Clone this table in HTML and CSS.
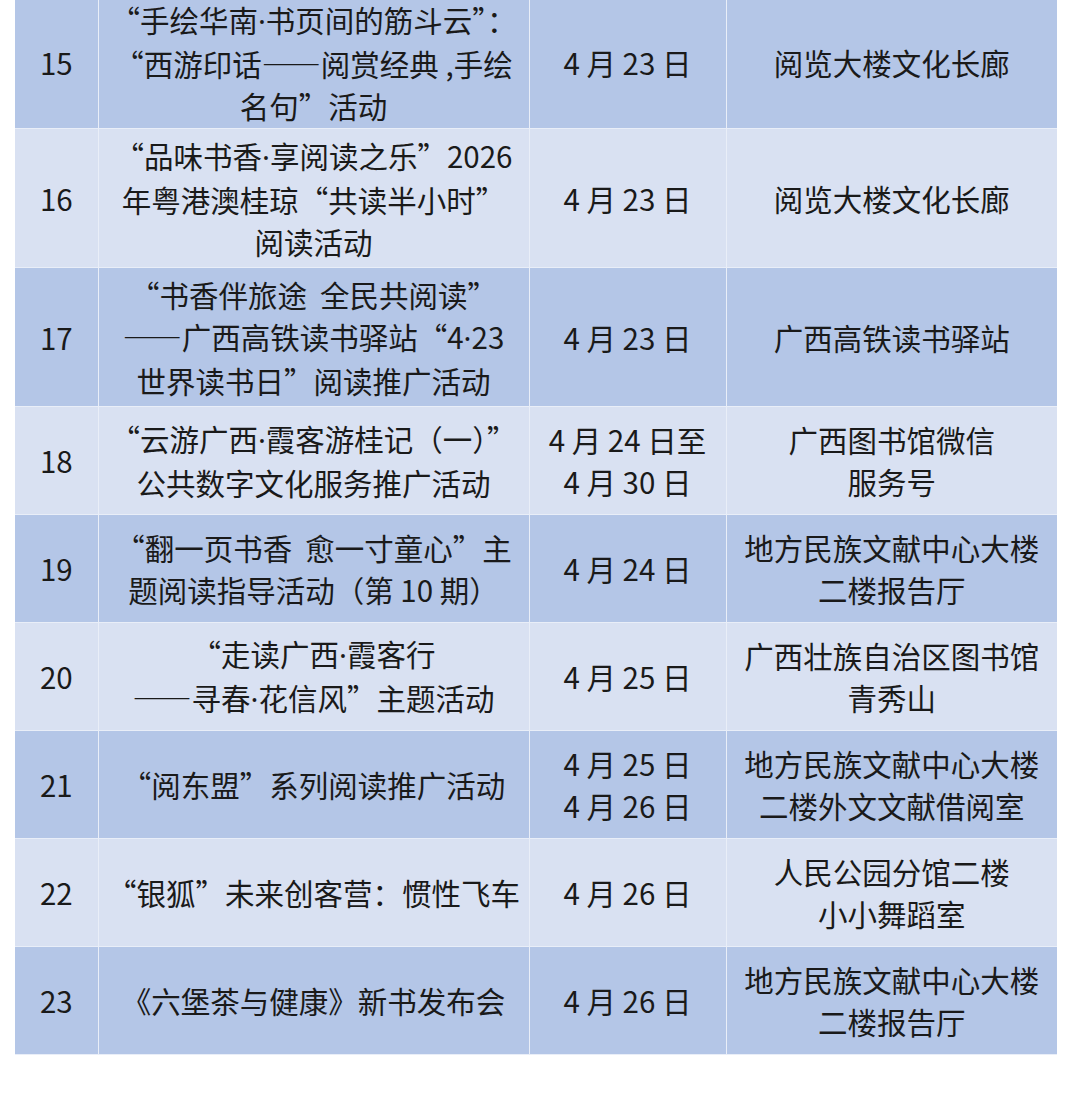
FILE: index.html
```html
<!DOCTYPE html>
<html lang="zh-CN">
<head>
<meta charset="utf-8">
<title>活动表</title>
<link rel="stylesheet" href="styles.css">
</head>
<body>
<div class="wrap">
<table class="sched">
<colgroup>
<col class="c-no"><col class="c-name"><col class="c-date"><col class="c-place">
</colgroup>
<tbody>
<tr class="dark first">
<td>15</td>
<td>“手绘华南<span class="dot">·</span>书页间的筋斗云”：<br>“西游印话——阅赏经典 ,手绘<br>名句”活动</td>
<td>4 月 23 日</td>
<td>阅览大楼文化长廊</td>
</tr>
<tr class="light tall3">
<td>16</td>
<td>“品味书香<span class="dot">·</span>享阅读之乐”2026<br>年粤港澳桂琼“共读半小时”<br>阅读活动</td>
<td>4 月 23 日</td>
<td>阅览大楼文化长廊</td>
</tr>
<tr class="dark tall3">
<td>17</td>
<td>“书香伴旅途&nbsp;&nbsp;全民共阅读”<br>——广西高铁读书驿站“4<span class="dot">·</span>23<br>世界读书日”阅读推广活动</td>
<td>4 月 23 日</td>
<td>广西高铁读书驿站</td>
</tr>
<tr class="light tall2">
<td>18</td>
<td>“云游广西<span class="dot">·</span>霞客游桂记（一）”<br>公共数字文化服务推广活动</td>
<td>4 月 24 日至<br>4 月 30 日</td>
<td>广西图书馆微信<br>服务号</td>
</tr>
<tr class="dark tall2">
<td>19</td>
<td>“翻一页书香&nbsp;&nbsp;愈一寸童心”主<br>题阅读指导活动（第 10 期）</td>
<td>4 月 24 日</td>
<td>地方民族文献中心大楼<br>二楼报告厅</td>
</tr>
<tr class="light tall2">
<td>20</td>
<td>“走读广西<span class="dot">·</span>霞客行<br>——寻春<span class="dot">·</span>花信风”主题活动</td>
<td>4 月 25 日</td>
<td>广西壮族自治区图书馆<br>青秀山</td>
</tr>
<tr class="dark tall2">
<td>21</td>
<td>“阅东盟”系列阅读推广活动</td>
<td>4 月 25 日<br>4 月 26 日</td>
<td>地方民族文献中心大楼<br>二楼外文文献借阅室</td>
</tr>
<tr class="light tall2">
<td>22</td>
<td>“银狐”未来创客营：惯性飞车</td>
<td>4 月 26 日</td>
<td>人民公园分馆二楼<br>小小舞蹈室</td>
</tr>
<tr class="dark tall2">
<td>23</td>
<td>《六堡茶与健康》新书发布会</td>
<td>4 月 26 日</td>
<td>地方民族文献中心大楼<br>二楼报告厅</td>
</tr>
</tbody>
</table>
</div>
</body>
</html>
```

FILE: styles.css
```css
html, body {
  margin: 0;
  padding: 0;
  background: #ffffff;
}
body {
  width: 1080px;
  height: 1094px;
  overflow: hidden;
  font-family: "Noto Sans CJK SC", "Noto Sans", sans-serif;
  color: #1a1a1a;
}
.wrap {
  padding-left: 15px;
  margin-top: -4px;
}
.sched {
  border-collapse: collapse;
  table-layout: fixed;
  width: 1042px;
}
.c-no { width: 83px; }
.c-name { width: 431px; }
.c-date { width: 197px; }
.c-place { width: 331px; }
.sched td {
  border: 1px solid #e9eef8;
  padding: 0;
  text-align: center;
  vertical-align: middle;
  font-size: 29.5px;
  line-height: 42px;
  white-space: nowrap;
}
.dot {
  font-family: "Noto Sans", sans-serif;
}
.sched tr.dark td { background: #b4c6e7; }
.sched tr.light td { background: #d9e1f2; }
.sched tr.first { height: 132px; }
.sched tr.tall3 { height: 139px; }
.sched tr.tall2 { height: 108px; }
.sched tr:first-child td { border-top: 0; }
.sched td:first-child { border-left: 0; }
.sched td:last-child { border-right: 0; }
```
